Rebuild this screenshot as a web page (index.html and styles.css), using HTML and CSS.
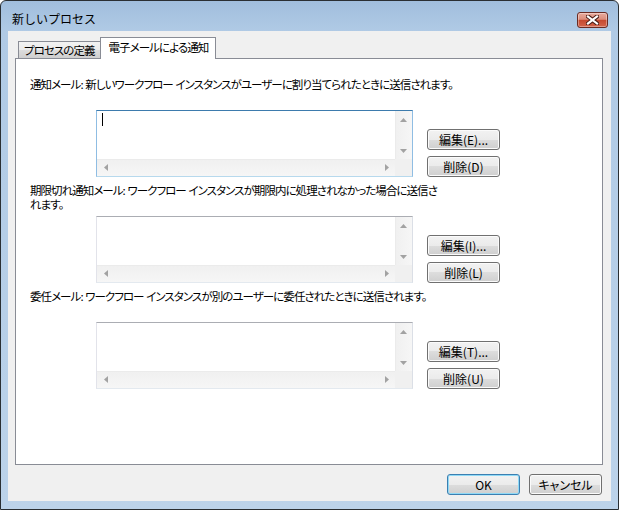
FILE: index.html
```html
<!DOCTYPE html>
<html lang="ja">
<head>
<meta charset="utf-8">
<title>新しいプロセス</title>
<link rel="stylesheet" href="styles.css">
</head>
<body>
<div class="window">
  <div class="titlebar">
    <span class="title">新しいプロセス</span>
    <button class="close" aria-label="閉じる">
      <svg width="13" height="10" viewBox="0 0 13 10">
        <path d="M2 1.5 L11 8.5 M11 1.5 L2 8.5" stroke="#4b1d16" stroke-width="4.2" stroke-linecap="square" fill="none"/>
        <path d="M2 1.5 L11 8.5 M11 1.5 L2 8.5" stroke="#ffffff" stroke-width="2.2" stroke-linecap="square" fill="none"/>
      </svg>
    </button>
  </div>
  <div class="client">
    <div class="tabs">
      <div class="tab">プロセスの定義</div>
      <div class="tab active">電子メールによる通知</div>
    </div>
    <div class="panel">
      <div class="group">
        <p class="label">通知メール: 新しいワークフロー インスタンスがユーザーに割り当てられたときに送信されます。</p>
        <div class="row">
          <div class="memo focused">
            <div class="memo-body"><span class="caret"></span></div>
            <div class="vscroll">
              <span class="arrow"><svg width="7" height="4" viewBox="0 0 7 4"><path d="M0 4 L3.5 0 L7 4 Z" fill="#a2a2a2"/></svg></span>
              <span class="arrow"><svg width="7" height="4" viewBox="0 0 7 4"><path d="M0 0 L3.5 4 L7 0 Z" fill="#a2a2a2"/></svg></span>
            </div>
            <div class="hscroll">
              <span class="arrow"><svg width="4" height="7" viewBox="0 0 4 7"><path d="M4 0 L0 3.5 L4 7 Z" fill="#a2a2a2"/></svg></span>
              <span class="arrow"><svg width="4" height="7" viewBox="0 0 4 7"><path d="M0 0 L4 3.5 L0 7 Z" fill="#a2a2a2"/></svg></span>
            </div>
            <div class="corner"></div>
          </div>
          <div class="actions">
            <button class="btn">編集(E)...</button>
            <button class="btn">削除(D)</button>
          </div>
        </div>
      </div>
      <div class="group">
        <p class="label"><span class="line">期限切れ通知メール: ワークフロー インスタンスが期限内に処理されなかった場合に送信さ</span><span class="line">れます。</span></p>
        <div class="row">
          <div class="memo">
            <div class="memo-body"></div>
            <div class="vscroll">
              <span class="arrow"><svg width="7" height="4" viewBox="0 0 7 4"><path d="M0 4 L3.5 0 L7 4 Z" fill="#a2a2a2"/></svg></span>
              <span class="arrow"><svg width="7" height="4" viewBox="0 0 7 4"><path d="M0 0 L3.5 4 L7 0 Z" fill="#a2a2a2"/></svg></span>
            </div>
            <div class="hscroll">
              <span class="arrow"><svg width="4" height="7" viewBox="0 0 4 7"><path d="M4 0 L0 3.5 L4 7 Z" fill="#a2a2a2"/></svg></span>
              <span class="arrow"><svg width="4" height="7" viewBox="0 0 4 7"><path d="M0 0 L4 3.5 L0 7 Z" fill="#a2a2a2"/></svg></span>
            </div>
            <div class="corner"></div>
          </div>
          <div class="actions">
            <button class="btn">編集(I)...</button>
            <button class="btn">削除(L)</button>
          </div>
        </div>
      </div>
      <div class="group">
        <p class="label">委任メール: ワークフロー インスタンスが別のユーザーに委任されたときに送信されます。</p>
        <div class="row">
          <div class="memo">
            <div class="memo-body"></div>
            <div class="vscroll">
              <span class="arrow"><svg width="7" height="4" viewBox="0 0 7 4"><path d="M0 4 L3.5 0 L7 4 Z" fill="#a2a2a2"/></svg></span>
              <span class="arrow"><svg width="7" height="4" viewBox="0 0 7 4"><path d="M0 0 L3.5 4 L7 0 Z" fill="#a2a2a2"/></svg></span>
            </div>
            <div class="hscroll">
              <span class="arrow"><svg width="4" height="7" viewBox="0 0 4 7"><path d="M4 0 L0 3.5 L4 7 Z" fill="#a2a2a2"/></svg></span>
              <span class="arrow"><svg width="4" height="7" viewBox="0 0 4 7"><path d="M0 0 L4 3.5 L0 7 Z" fill="#a2a2a2"/></svg></span>
            </div>
            <div class="corner"></div>
          </div>
          <div class="actions">
            <button class="btn">編集(T)...</button>
            <button class="btn">削除(U)</button>
          </div>
        </div>
      </div>
    </div>
    <div class="footer">
      <button class="btn default">OK</button>
      <button class="btn">キャンセル</button>
    </div>
  </div>
</div>
</body>
</html>
```

FILE: styles.css
```css
html, body {
  margin: 0;
  padding: 0;
  background: #ffffff;
}

body {
  font-family: "Noto Sans CJK JP", "Noto Sans", sans-serif;
  font-size: 11.5px;
  letter-spacing: -0.95px;
  word-spacing: 1px;
  color: #000000;
  font-feature-settings: "palt";
}

.window {
  width: 619px;
  height: 510px;
  box-sizing: border-box;
  border: 1px solid #2a2f33;
  border-radius: 6px 6px 0 0;
  background: linear-gradient(to bottom, #a1bedd 0, #b0cae5 30px, #bcd3ea 100%);
  display: flex;
  flex-direction: column;
  overflow: hidden;
}

.titlebar {
  height: 30px;
  flex: none;
  display: flex;
  align-items: flex-start;
  justify-content: space-between;
  padding: 0 10px 0 11px;
}

.title {
  margin-top: 10px;
  line-height: 16px;
  font-size: 12px;
  letter-spacing: 0;
  word-spacing: 0;
  font-feature-settings: normal;
}

.close {
  margin-top: 11px;
  width: 31px;
  height: 16px;
  padding: 0;
  box-sizing: border-box;
  border: 1px solid #6a2b23;
  border-radius: 3px;
  background: linear-gradient(to bottom, #e8ab9e 0, #dc8d7b 45%, #c6492f 52%, #d3644b 100%);
  box-shadow: inset 0 0 0 1px rgba(255, 255, 255, 0.35);
  display: flex;
  align-items: center;
  justify-content: center;
}

.client {
  flex: 1;
  margin: 0 7px 8px;
  background: #f0f0f0;
  display: flex;
  flex-direction: column;
}

.tabs {
  flex: none;
  height: 27px;
  display: flex;
  align-items: flex-end;
  padding-left: 10px;
}

.tab {
  height: 16px;
  line-height: 16px;
  padding: 0 5px 0 5px;
  border: 1px solid #898c95;
  border-bottom: none;
  background: linear-gradient(to bottom, #f2f2f2 0, #ebebeb 50%, #dddddd 50%, #cfcfcf 100%);
  white-space: nowrap;
}

.tab.active {
  height: 21px;
  line-height: 19px;
  padding: 0 7px 0 8px;
  margin-left: -1px;
  margin-bottom: -1px;
  background: #ffffff;
  position: relative;
  z-index: 1;
}

.panel {
  flex: none;
  height: 407px;
  box-sizing: border-box;
  margin: 0 8px 0 7px;
  border: 1px solid #898c95;
  background: #ffffff;
  padding: 18px 0 0 14px;
}

.group {
  margin-bottom: 6px;
}

.label {
  margin: 0;
  height: 33px;
  line-height: 14px;
  white-space: nowrap;
}

.line {
  display: block;
  height: 14px;
}

.row {
  display: flex;
  margin-left: 66px;
}

.memo {
  width: 317px;
  height: 67px;
  box-sizing: border-box;
  border: 1px solid;
  border-color: #abadb3 #dbdfe6 #e3e9ef #e2e3ea;
  background: #ffffff;
  display: grid;
  grid-template-columns: 1fr 17px;
  grid-template-rows: 1fr 17px;
}

.memo.focused {
  border-color: #3d7bad #8fbde3 #b7d9ed #8fbde3;
}

.memo-body {
  padding: 2px 0 0 5px;
}

.caret {
  display: block;
  width: 1px;
  height: 13px;
  background: #000000;
}

.vscroll {
  background: linear-gradient(to right, #e6e6e6 0, #f0f0f0 1px, #f6f6f6 100%);
  display: flex;
  flex-direction: column;
  justify-content: space-between;
}

.hscroll {
  background: linear-gradient(to bottom, #e6e6e6 0, #f0f0f0 1px, #f6f6f6 100%);
  display: flex;
  justify-content: space-between;
}

.arrow {
  width: 17px;
  height: 17px;
  display: flex;
  align-items: center;
  justify-content: center;
}

.corner {
  background: #f0f0f0;
}

.actions {
  margin-left: 14px;
  display: flex;
  flex-direction: column;
  justify-content: flex-end;
  gap: 6px;
}

.btn {
  width: 73px;
  height: 21px;
  box-sizing: border-box;
  padding: 0;
  border: 1px solid #707070;
  border-radius: 3px;
  background: linear-gradient(to bottom, #f2f2f2 0, #ebebeb 50%, #dddddd 50%, #cfcfcf 100%);
  box-shadow: inset 0 0 0 1px #fbfbfb;
  font: inherit;
  font-size: 12px;
  font-feature-settings: "palt";
  letter-spacing: 0;
  word-spacing: 0;
  color: #000000;
  line-height: 18px;
  white-space: nowrap;
}

.btn.default {
  border-color: #3c7fb1;
  box-shadow: inset 0 0 0 1px #8fd9f6;
}

.footer {
  display: flex;
  justify-content: flex-end;
  gap: 9px;
  padding: 9px 9px 0 0;
}
```
